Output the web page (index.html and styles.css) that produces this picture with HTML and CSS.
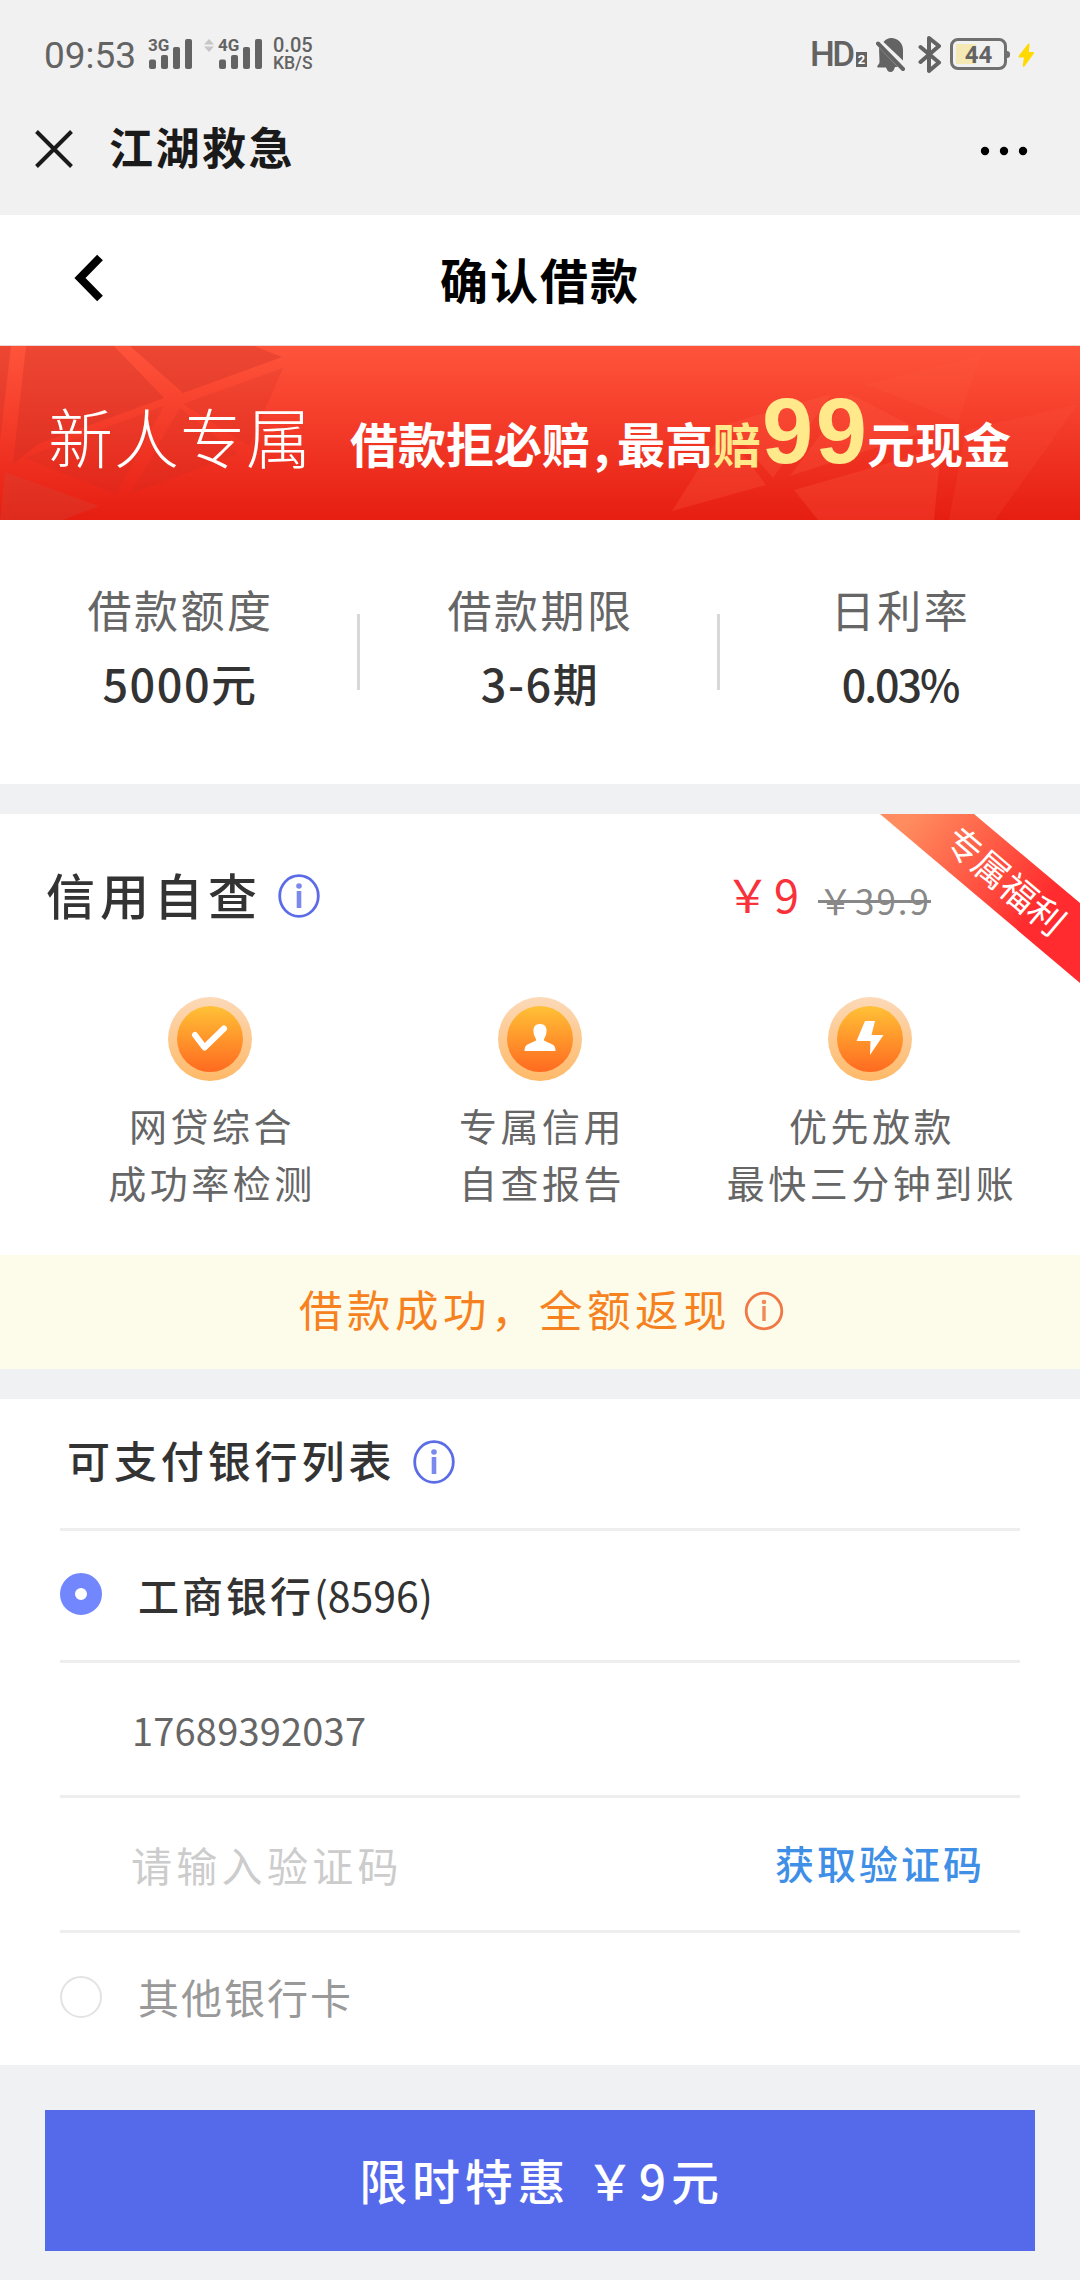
FILE: index.html
```html
<!DOCTYPE html>
<html lang="zh-CN">
<head>
<meta charset="utf-8">
<title>确认借款</title>
<link rel="stylesheet" href="styles.css">
</head>
<body>
<div class="statusbar">
  <span class="clock">09:53</span>
  <div class="signal">
    <span class="net">3G</span>
    <svg width="43" height="30" viewBox="0 0 43 30" fill="#636363"><rect y="20.5" width="7" height="9.5" rx="2"/><rect x="12" y="16" width="7" height="14" rx="2"/><rect x="24" y="8" width="7" height="22" rx="2"/><rect x="36" width="7" height="30" rx="2"/></svg>
  </div>
  <svg class="updown" width="10" height="13" viewBox="0 0 10 13" fill="#c6c6c6"><path d="M0 5.5L5 0l5 5.500zM0 7.500h10L5 13z"/></svg>
  <div class="signal">
    <span class="net">4G</span>
    <svg width="43" height="30" viewBox="0 0 43 30" fill="#636363"><rect y="20.5" width="7" height="9.5" rx="2"/><rect x="12" y="16" width="7" height="14" rx="2"/><rect x="24" y="8" width="7" height="22" rx="2"/><rect x="36" width="7" height="30" rx="2"/></svg>
  </div>
  <div class="speed"><span>0.05</span><span class="unit">KB/S</span></div>
  <div class="status-right">
    <span class="hd">HD</span>
    <span class="sim">2</span>
    <svg class="bell" width="30" height="36" viewBox="0 0 30 36">
      <path d="M7.500 5C10 2 12.500 1 15 1c7 0 12 5 12 12v10.500zM3 10.500L22 30h-3c-1 3-2 5-4.500 5S11 33 10 30.500H2c-1 0-1-1.500 0-2.500 1.500-1.500 1.500-2 1.500-4z" fill="#636363"/>
      <path d="M2 6.500L27 32" stroke="#636363" stroke-width="4" stroke-linecap="round"/>
    </svg>
    <svg class="bt" width="24" height="39" viewBox="0 0 24 39" fill="none" stroke="#636363" stroke-width="4" stroke-linejoin="round" stroke-linecap="round"><path d="M2.500 12L21 27.500 11 36V3l10 8L2.500 27"/></svg>
    <div class="battery"><span>44</span></div>
    <svg class="bolt" width="17" height="24" viewBox="0 0 17 24" fill="#ffd900"><path d="M9.500 1.500L1 12.500c-1 1.300-.5 2 .5 2H6L4.800 22c-.2 2 1 2.400 2 1L15.500 11c1-1.400.3-2-.8-2h-3.900L11.500 2c.1-1.700-1-2-2-.5z"/></svg>
  </div>
</div>

<div class="titlebar">
  <svg class="close" width="38" height="38" viewBox="0 0 38 38" stroke="#1a1a1a" stroke-width="4"><path d="M1.500 1.500l35 35M36.500 1.500l-35 35"/></svg>
  <span class="app-name">江湖救急</span>
  <svg class="more" width="48" height="10" viewBox="0 0 48 10"><circle cx="5" cy="5" r="4.200"/><circle cx="24" cy="5" r="4.200"/><circle cx="43" cy="5" r="4.200"/></svg>
</div>

<div class="nav">
  <svg class="back" width="30" height="48" viewBox="0 0 30 48" fill="none" stroke="#000" stroke-width="8"><path d="M26 3.500L6 24l20 20.500"/></svg>
  <h1>确认借款</h1>
</div>

<div class="banner">
  <svg class="facets" width="1080" height="174" viewBox="0 0 1080 174">
    <g fill="#c52d24" opacity=".3">
      <path d="M0 0h11L0 95zM26 0h88l50 52L38 98 13 118zM130 0h124l28 11-99 36z"/>
      <path d="M283 22l-34 78-66-42zM164 60l-48 88-92-36zM180 62l58 46-108 40z" opacity=".6"/>
    </g>
    <path d="M5 126l94 34-36 14H0z" fill="#cf4a3a" opacity=".3"/>
    <g fill="#ff6048" opacity=".25">
      <path d="M672 165l52-82 42 56zM727 78l104-30-58 84zM850 48l74 38-134 44zM794 144l147-42-7 72H818z"/>
      <path d="M865 38L980 10l-22 66-18-8zM966 84l112-26-83 116h-46z" opacity=".6"/>
    </g>
  </svg>
  <span class="newcomer">新人专属</span>
  <div class="slogan"><span>借款拒必赔</span><span class="comma">,</span><span>最高</span><span class="gold">赔</span><span class="amount">99</span><span>元现金</span></div>
</div>

<div class="stats">
  <div class="stat"><span class="label">借款额度</span><span class="value">5000元</span></div>
  <div class="stat"><span class="label">借款期限</span><span class="value">3-6期</span></div>
  <div class="stat"><span class="label">日利率</span><span class="value rate">0.03%</span></div>
</div>

<div class="credit">
  <div class="credit-head">
    <h2>信用自查</h2>
    <svg class="info" width="42" height="44" viewBox="0 0 42 44"><ellipse cx="21" cy="22" rx="19.300" ry="20.300" fill="none" stroke="#5b6ce6" stroke-width="2.800"/><circle cx="21" cy="12" r="2.800" fill="#7b88ee"/><path d="M21 17v17" stroke="#7b88ee" stroke-width="4.600"/></svg>
    <span class="price">￥9</span>
    <span class="old-price">￥39.9</span>
  </div>
  <div class="ribbon"><span>专属福利</span></div>
  <div class="features">
    <div class="feature">
      <svg width="84" height="84" viewBox="0 0 84 84">
        <defs>
          <linearGradient id="ring" x2="0" y2="1"><stop stop-color="#fcd9b8"/><stop offset="1" stop-color="#feb967"/></linearGradient>
          <linearGradient id="disc" x2="0" y2="1"><stop stop-color="#ffc136"/><stop offset="1" stop-color="#ff6a20"/></linearGradient>
        </defs>
        <circle cx="42" cy="42" r="42" fill="url(#ring)"/><circle cx="42" cy="42" r="33" fill="url(#disc)"/>
        <path d="M27 38l9.500 12.500L56 31.500" fill="none" stroke="#fff" stroke-width="6" stroke-linecap="round" stroke-linejoin="round"/>
      </svg>
      <p>网贷综合<br>成功率检测</p>
    </div>
    <div class="feature">
      <svg width="84" height="84" viewBox="0 0 84 84">
        <circle cx="42" cy="42" r="42" fill="url(#ring)"/><circle cx="42" cy="42" r="33" fill="url(#disc)"/>
        <path d="M42 27c5 0 7 3.500 6.500 8-.3 3-1.500 5.500-2.500 7v1.500l8.500 4c2 1 3 3 3 6.500h-31c0-3.500 1-5.500 3-6.500l8.500-4V42c-1-1.500-2.200-4-2.500-7-.5-4.500 1.500-8 6.500-8z" fill="#fff"/>
      </svg>
      <p>专属信用<br>自查报告</p>
    </div>
    <div class="feature">
      <svg width="84" height="84" viewBox="0 0 84 84">
        <circle cx="42" cy="42" r="42" fill="url(#ring)"/><circle cx="42" cy="42" r="33" fill="url(#disc)"/>
        <path d="M37 24h10l-3.500 14H55.500L42 58l.5-14H28.500z" fill="#fff"/>
      </svg>
      <p>优先放款<br>最快三分钟到账</p>
    </div>
  </div>
  <div class="cashback">
    <span>借款成功，全额返现</span>
    <svg width="40" height="40" viewBox="0 0 40 40"><circle cx="20" cy="20" r="17.800" fill="none" stroke="#ef7844" stroke-width="2.800"/><circle cx="20" cy="11" r="2.300" fill="#f08a5a"/><path d="M20 15v15" stroke="#f08a5a" stroke-width="3.400"/></svg>
  </div>
</div>

<div class="banks">
  <div class="bank-head">
    <h2>可支付银行列表</h2>
    <svg class="info" width="42" height="44" viewBox="0 0 42 44"><ellipse cx="21" cy="22" rx="19.300" ry="20.300" fill="none" stroke="#5b6ce6" stroke-width="2.800"/><circle cx="21" cy="12" r="2.800" fill="#7b88ee"/><path d="M21 17v17" stroke="#7b88ee" stroke-width="4.600"/></svg>
  </div>
  <div class="row choice"><span class="radio on"></span><span class="bank">工商银行<b>(8596)</b></span></div>
  <div class="row field"><span class="phone">17689392037</span></div>
  <div class="row field"><span class="placeholder">请输入验证码</span><span class="get-code">获取验证码</span></div>
  <div class="row choice last"><span class="radio"></span><span class="bank other">其他银行卡</span></div>
</div>

<div class="footer"><div class="pay">限时特惠 ￥9元</div></div>
</body>
</html>
```
FILE: styles.css
```css
* { box-sizing: border-box; }
body {
  margin: 0;
  width: 1080px;
  height: 2280px;
  overflow: hidden;
  background: #f0f1f3;
  color: #333;
  font-family: "Noto Sans CJK SC", sans-serif;
}
h1, h2, p { margin: 0; font-weight: 400; }
svg { display: block; flex: none; }
span { white-space: nowrap; }

/* system status bar */
.statusbar {
  display: flex;
  align-items: flex-start;
  height: 90px;
  padding: 0 45px 0 44px;
  background: #f1f1f1;
  color: #636363;
  font-family: Roboto, sans-serif;
}
.clock { width: 105px; padding-top: 34px; font-size: 37px; line-height: 44px; }
.signal { position: relative; width: 43px; margin-top: 39px; }
.net {
  position: absolute;
  left: -1px;
  top: -3px;
  font-size: 17px;
  font-weight: 700;
  line-height: 18px;
}
.updown { margin: 39px 5px 0 12px; }
.speed {
  display: flex;
  flex-direction: column;
  margin: 35px 0 0 11px;
  font-size: 20px;
  font-weight: 500;
  line-height: 20px;
}
.speed .unit { font-size: 17.500px; line-height: 17px; }
.status-right { display: flex; margin-left: auto; }
.hd { width: 45px; margin-right: 1px; padding-top: 33px; font-size: 35px; line-height: 44px; letter-spacing: -2.500px; font-weight: 500; }
.sim {
  width: 11px;
  height: 15px;
  margin-top: 52px;
  background: #636363;
  color: #fff;
  font-size: 13px;
  font-weight: 700;
  line-height: 16px;
  text-align: center;
}
.bell { margin: 37px 0 0 9px; }
.bt { margin: 35px 0 0 12px; }
.battery {
  position: relative;
  width: 57px;
  height: 32px;
  margin: 38px 0 0 8px;
  border: 3px solid #707070;
  border-radius: 8px;
  background: linear-gradient(90deg, #f4e9b4 20px, transparent 20px) 3px 3px / 45px 20px no-repeat;
  font-size: 24px;
  font-weight: 700;
  line-height: 28px;
  text-align: center;
}
.battery::after {
  content: "";
  position: absolute;
  right: -6px;
  top: 10px;
  width: 4px;
  height: 7px;
  border-radius: 0 3px 3px 0;
  background: #707070;
}
.bolt { margin: 43px 0 0 11px; }

/* in-app browser title */
.titlebar {
  display: flex;
  align-items: center;
  height: 125px;
  padding: 0 52px 7px 35px;
  background: #f1f1f1;
}
.app-name {
  margin: -6px 0 0 36px;
  color: #1a1a1a;
  font-size: 44px;
  font-weight: 700;
  letter-spacing: 2.500px;
  line-height: 60px;
}
.more { margin-left: auto; margin-top: 3px; }

.nav {
  display: grid;
  grid-template-columns: 100px 1fr 100px;
  align-items: center;
  height: 131px;
  padding: 0 0 5px;
  background: #fff;
  border-bottom: 1px solid #ecd9d7;
}
.back { margin: 0 0 0 74px; }
.nav h1 { color: #000; font-size: 48px; font-weight: 700; letter-spacing: 2px; text-align: center; line-height: 60px; }

/* promotion banner */
.banner {
  position: relative;
  display: flex;
  align-items: flex-start;
  height: 174px;
  padding-left: 48px;
  background: linear-gradient(#ff543c, #e61e12);
  color: #fff;
}
.facets { position: absolute; left: 0; top: 0; }
.newcomer {
  position: relative;
  width: 302px;
  padding-top: 44px;
  font-size: 65px;
  font-weight: 300;
  line-height: 90px;
  letter-spacing: 1px;
}
.slogan {
  position: relative;
  display: flex;
  align-items: baseline;
  font-size: 48px;
  font-weight: 700;
  line-height: 90px;
  padding-top: 40px;
}
.comma { width: 27px; padding-left: 4px; }
.gold, .amount { color: #ffe98b; }
.amount {
  margin-left: 1px;
  width: 105px;
  font-family: "Liberation Sans", sans-serif;
  font-size: 92px;
  letter-spacing: 2.500px;
}

/* loan figures */
.stats { display: flex; height: 264px; padding-top: 94px; background: #fff; }
.stat { position: relative; display: flex; flex-direction: column; width: 360px; height: 76px; align-items: center; }
.stat + .stat::before {
  content: "";
  position: absolute;
  left: -3px;
  top: 0;
  width: 3px;
  height: 76px;
  background: #d8d8d8;
}
.stat .label { margin: -35px 0 0 1px; color: #666; font-size: 44px; letter-spacing: 2.500px; line-height: 60px; }
.stat .value { margin-top: 14px; font-size: 45px; font-weight: 500; line-height: 60px; letter-spacing: 1.500px; }
.stat .rate { font-size: 43px; letter-spacing: -2px; }

/* credit self-check card */
.credit { position: relative; margin-top: 30px; height: 555px; background: #fff; }
.credit-head { display: flex; align-items: center; height: 164px; padding-left: 46px; }
.credit-head h2 { width: 232px; margin-top: -4px; font-size: 49px; font-weight: 500; letter-spacing: 5px; line-height: 70px; }
.price { margin: -4px 0 0 405px; color: #f8313a; font-size: 45px; line-height: 60px; letter-spacing: 4px; }
.old-price {
  margin: 8px 0 0 15px;
  color: #888;
  font-size: 35px;
  line-height: 50px;
  letter-spacing: 2px;
  text-decoration: line-through;
  text-decoration-thickness: 3px;
}
.ribbon {
  position: absolute;
  right: 0;
  top: 0;
  width: 200px;
  height: 169px;
}
.ribbon::before {
  content: "";
  position: absolute;
  inset: 0;
  background: linear-gradient(130deg, #ff8c5e 10%, #ff2b2e 70%);
  clip-path: polygon(0 0, 94px 0, 200px 89px, 200px 169px);
}
.ribbon span {
  position: absolute;
  left: 54px;
  top: 42px;
  width: 146px;
  color: #fff;
  font-size: 36px;
  line-height: 46px;
  text-align: center;
  transform: rotate(40.5deg);
}
.features { display: flex; height: 277px; padding: 19px 45px 0; }
.feature { width: 330px; display: flex; flex-direction: column; align-items: center; }
.feature p {
  margin-top: 15px;
  padding-left: 4px;
  color: #666;
  font-size: 38px;
  line-height: 57px;
  letter-spacing: 3.500px;
  text-align: center;
  white-space: nowrap;
}
.cashback {
  display: flex;
  align-items: center;
  height: 114px;
  padding-left: 299px;
  background: #fdfbea;
  color: #f6821f;
  font-size: 43.500px;
  letter-spacing: 4.500px;
}
.cashback span { width: 445px; margin-top: -7px; }
.cashback svg { margin-top: -2px; }

/* bank list */
.banks { margin-top: 30px; padding: 0 60px; background: #fff; height: 666px; }
.bank-head { display: flex; align-items: center; height: 132px; padding: 0 0 4px 7px; border-bottom: 3px solid #eee; }
.bank-head h2 { width: 346px; margin-top: -5px; font-size: 43px; letter-spacing: 3.900px; line-height: 60px; font-weight: 500; }
.row { display: flex; align-items: center; height: 135px; border-bottom: 3px solid #eee; }
.choice { height: 132px; }
.row.last { border: 0; height: 132px; padding-bottom: 5px; }
.radio { width: 42px; height: 42px; border: 2.500px solid #e3e3e3; border-radius: 50%; }
.radio.on { margin-top: -3px; border: 15px solid #7287fd; }
.bank { margin: -4px 0 0 36px; font-size: 41px; letter-spacing: 3px; font-weight: 500; }
.bank b { font-weight: 400; letter-spacing: 0; }
.other { margin-top: -1px; color: #999; font-weight: 400; letter-spacing: 2px; }
.field { padding: 0 35px 0 72px; justify-content: space-between; }
.phone { color: #666; font-size: 38px; letter-spacing: .2px; }
.placeholder { margin-left: -1px; color: #ccc; font-size: 41px; letter-spacing: 4.300px; }
.get-code { margin-top: -5px; color: #3f8fe6; font-size: 39px; font-weight: 500; letter-spacing: 3px; }

.footer { padding: 45px 45px 0; }
.pay {
  height: 141px;
  padding-left: 3px;
  background: #556aeb;
  color: #fff;
  font-size: 48px;
  font-weight: 500;
  letter-spacing: 4.800px;
  line-height: 138px;
  text-align: center;
}
```
